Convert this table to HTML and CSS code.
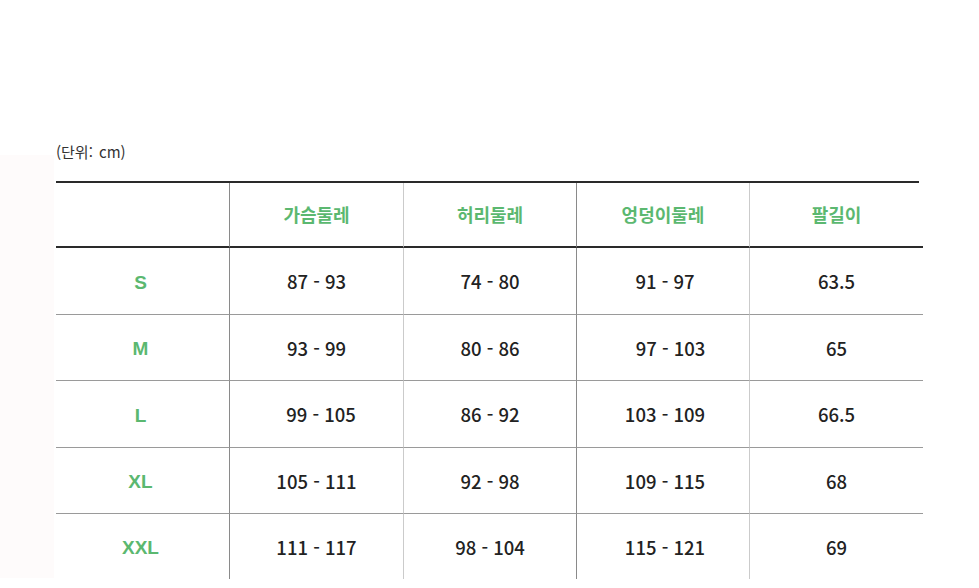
FILE: index.html
```html
<!DOCTYPE html>
<html lang="ko">
<head>
<meta charset="utf-8">
<title>사이즈표</title>
<link rel="stylesheet" href="styles.css">
</head>
<body>
<div class="page">
  <p class="unit">(단위: cm)</p>
  <div class="size-table">
    <div class="cell head"></div>
    <div class="cell head">가슴둘레</div>
    <div class="cell head">허리둘레</div>
    <div class="cell head">엉덩이둘레</div>
    <div class="cell head last">팔길이</div>

    <div class="cell label">S</div>
    <div class="cell num">87 - 93</div>
    <div class="cell num">74 - 80</div>
    <div class="cell num">91 - 97</div>
    <div class="cell num last">63.5</div>

    <div class="cell label">M</div>
    <div class="cell num">93 - 99</div>
    <div class="cell num">80 - 86</div>
    <div class="cell num shift-lg">97 - 103</div>
    <div class="cell num last">65</div>

    <div class="cell label">L</div>
    <div class="cell num shift">99 - 105</div>
    <div class="cell num">86 - 92</div>
    <div class="cell num">103 - 109</div>
    <div class="cell num last">66.5</div>

    <div class="cell label">XL</div>
    <div class="cell num">105 - 111</div>
    <div class="cell num">92 - 98</div>
    <div class="cell num">109 - 115</div>
    <div class="cell num last">68</div>

    <div class="cell label end">XXL</div>
    <div class="cell num end">111 - 117</div>
    <div class="cell num end">98 - 104</div>
    <div class="cell num end">115 - 121</div>
    <div class="cell num last end">69</div>
  </div>
</div>
</body>
</html>
```

FILE: styles.css
```css
html, body {
  margin: 0;
  padding: 0;
  background: #fff;
}
body {
  background-image: linear-gradient(#fefbfb, #fefbfb);
  background-size: 54px 423px;
  background-position: 0 155px;
  background-repeat: no-repeat;
  min-height: 588px;
  font-family: "Noto Sans CJK KR", "Noto Sans", sans-serif;
  color: #222;
}
.page {
  padding: 141px 0 0 56px;
}
.unit {
  margin: 0;
  height: 40px;
  font-size: 15px;
  line-height: 21px;
  color: #333;
  word-spacing: 2px;
}
.size-table {
  display: grid;
  grid-template-columns: 174px 174px 173px 173px 173px;
  grid-template-rows: 65px 67px 66px 67px 66px 65px;
  border-top: 2px solid #2a2a2a;
  width: 863px;
}
.cell {
  box-sizing: border-box;
  display: flex;
  align-items: center;
  justify-content: center;
  border-bottom: 1px solid #9a9a9a;
}
.cell:nth-child(5n+1),
.cell:nth-child(5n+3) {
  border-right: 1px solid #8a8a8a;
}
.cell:nth-child(5n+2),
.cell:nth-child(5n+4) {
  border-right: 1px solid #cbcbcb;
}
.cell.head {
  border-bottom: 2px solid #2a2a2a;
  color: #5bb870;
  font-weight: 700;
  font-size: 18px;
  padding-bottom: 2px;
}
.cell.end {
  border-bottom: none;
}
.label {
  color: #5bb870;
  font-family: "Liberation Sans", Arial, sans-serif;
  font-weight: 700;
  font-size: 19px;
  padding: 3px 4px 0 0;
}
.num {
  font-size: 18.5px;
  font-weight: 500;
  color: #222;
}
.num:nth-child(5n+4) {
  padding-left: 4px;
}
.num.shift {
  padding-left: 9px;
}
.num.shift-lg {
  padding-left: 15px;
}
```
